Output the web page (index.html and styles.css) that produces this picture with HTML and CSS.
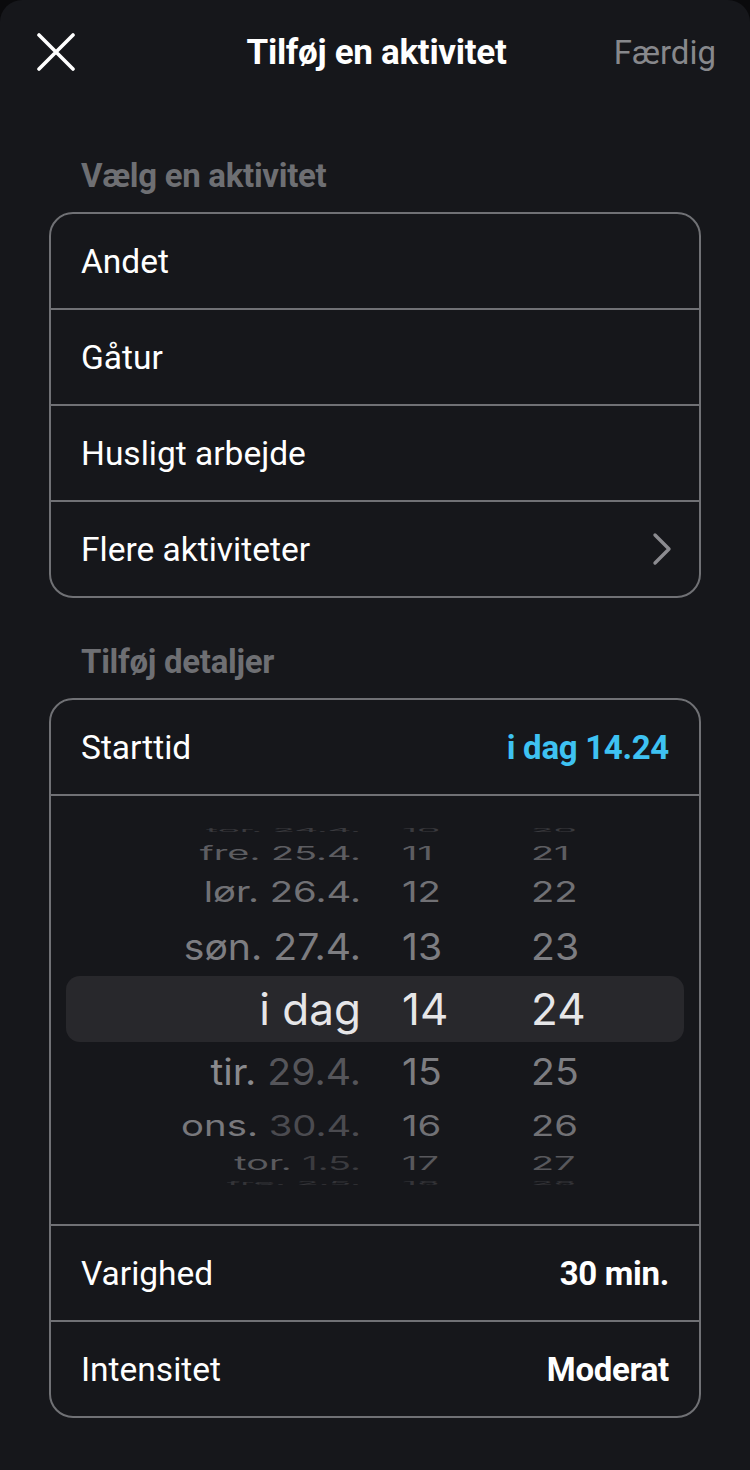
FILE: index.html
```html
<!DOCTYPE html>
<html lang="da">
<head>
<meta charset="utf-8">
<title>Tilføj en aktivitet</title>
<link rel="stylesheet" href="styles.css">
</head>
<body>
<div class="sheet">
  <header class="topbar">
    <button class="close" aria-label="Luk">
      <svg width="38" height="38" viewBox="0 0 38 38"><path d="M2 2 L36 36 M36 2 L2 36" stroke="#fff" stroke-width="3.6" stroke-linecap="round" fill="none"/></svg>
    </button>
    <h1 class="title">Tilføj en aktivitet</h1>
    <span class="done">Færdig</span>
  </header>

  <main class="content">
    <h2 class="section-label">Vælg en aktivitet</h2>
    <div class="card">
      <div class="row"><span class="label">Andet</span></div>
      <div class="row"><span class="label">Gåtur</span></div>
      <div class="row"><span class="label">Husligt arbejde</span></div>
      <div class="row"><span class="label">Flere aktiviteter</span>
        <svg class="chev" width="22" height="34" viewBox="0 0 22 34"><path d="M4 3 L18 17 L4 31" stroke="#8b8b90" stroke-width="3.4" stroke-linecap="round" stroke-linejoin="round" fill="none"/></svg>
      </div>
    </div>

    <h2 class="section-label second">Tilføj detaljer</h2>
    <div class="card">
      <div class="row"><span class="label">Starttid</span><span class="value blue">i dag 14.24</span></div>
      <div class="picker">
        <div class="prow p4"><span class="c-date"><span class="d">tor.</span> <span class="n">24.4.</span></span><span class="c-hour">10</span><span class="c-min">20</span></div>
        <div class="prow p3"><span class="c-date"><span class="d">fre.</span> <span class="n">25.4.</span></span><span class="c-hour">11</span><span class="c-min">21</span></div>
        <div class="prow p2"><span class="c-date"><span class="d">lør.</span> <span class="n">26.4.</span></span><span class="c-hour">12</span><span class="c-min">22</span></div>
        <div class="prow p1"><span class="c-date"><span class="d">søn.</span> <span class="n">27.4.</span></span><span class="c-hour">13</span><span class="c-min">23</span></div>
        <div class="prow p0"><span class="c-date">i dag</span><span class="c-hour">14</span><span class="c-min">24</span></div>
        <div class="prow n1"><span class="c-date"><span class="d">tir.</span> <span class="n">29.4.</span></span><span class="c-hour">15</span><span class="c-min">25</span></div>
        <div class="prow n2"><span class="c-date"><span class="d">ons.</span> <span class="n">30.4.</span></span><span class="c-hour">16</span><span class="c-min">26</span></div>
        <div class="prow n3"><span class="c-date"><span class="d">tor.</span> <span class="n">1.5.</span></span><span class="c-hour">17</span><span class="c-min">27</span></div>
        <div class="prow n4"><span class="c-date"><span class="d">fre.</span> <span class="n">2.5.</span></span><span class="c-hour">18</span><span class="c-min">28</span></div>
      </div>
      <div class="row"><span class="label">Varighed</span><span class="value">30 min.</span></div>
      <div class="row"><span class="label">Intensitet</span><span class="value">Moderat</span></div>
    </div>
  </main>
</div>
</body>
</html>
```

FILE: styles.css
```css
* { box-sizing: border-box; }
html, body { margin: 0; padding: 0; }
body {
  background: #0a0a0c;
  font-family: Roboto, "Noto Sans", "Liberation Sans", sans-serif;
  color: #fff;
}
.sheet {
  background: #16171b;
  min-height: 1470px;
  border-radius: 22px 22px 0 0;
}
.topbar {
  height: 104px;
  display: grid;
  grid-template-columns: 1fr auto 1fr;
  align-items: center;
  padding: 0 34px 0 37px;
}
.close {
  background: none;
  border: 0;
  padding: 0;
  width: 38px;
  height: 38px;
  display: flex;
  justify-self: start;
}
.title {
  margin: 0;
  font-size: 35px;
  font-weight: 700;
  letter-spacing: -0.3px;
  color: #fff;
}
.done {
  justify-self: end;
  font-size: 33px;
  color: #87888c;
}
.content {
  padding: 0 49px;
}
.section-label {
  margin: 52px 0 16px;
  padding-left: 32px;
  height: 40px;
  line-height: 40px;
  font-size: 33px;
  font-weight: 700;
  color: #6e6f73;
  letter-spacing: -0.3px;
}
.section-label.second { margin-top: 44px; }
.card {
  border: 2px solid #707175;
  border-radius: 24px;
  overflow: hidden;
}
.row {
  height: 94px;
  display: flex;
  align-items: center;
  justify-content: space-between;
  padding: 0 30px 0 30px;
}
.row + .row, .picker + .row {
  height: 96px;
  border-top: 2px solid #707175;
}
.row + .picker {
  border-top: 2px solid #707175;
}
.row .label {
  font-size: 33.5px;
  color: #fff;
}
.row .value {
  font-size: 33px;
  font-weight: 700;
  color: #fff;
  letter-spacing: -0.3px;
}
.row .value.blue { color: #3ec2f2; }
.chev { margin-right: -4px; }

/* wheel picker */
.picker {
  padding: 24px 15px 34px;
  font-family: Inter, "Liberation Sans", sans-serif;
  font-size: 44px;
}
.prow {
  display: flex;
  align-items: center;
  color: #7e7e82;
}
.prow > span { display: block; white-space: nowrap; line-height: 1; flex: none; }
.c-date { width: 295px; text-align: right; transform-origin: right center; }
.c-hour { width: 170px; padding-left: 41px; transform-origin: 41px center; }
.c-min { transform-origin: left center; }

.p4 { height: 20px; color: #3a3a3e; }
.p3 { height: 26px; color: #5d5d61; }
.p2 { height: 52px; color: #717175; }
.p1 { height: 58px; color: #7d7d81; }
.p0 { height: 66px; background: #28282c; border-radius: 14px; color: #e6e6e8; }
.n1 { height: 60px; color: #7d7d81; }
.n2 { height: 48px; color: #717175; }
.n3 { height: 26px; color: #58585c; }
.n4 { height: 14px; color: #343438; }

.p4 > span, .n4 > span { transform: scale(0.84, 0.12); }
.p3 > span, .n3 > span { transform: scale(0.86, 0.42); }
.p2 > span, .n2 > span { transform: scale(0.87, 0.65); }
.p1 > span, .n1 > span { transform: scale(0.89, 0.84); }
.p0 > span { transform: none; }

.n1 .d { color: #8a8a8e; }
.n1 .n { color: #55555a; }
.n2 .d { color: #78787c; }
.n2 .n { color: #4b4b50; }
.n3 .d { color: #5a5a5e; }
.n3 .n { color: #3b3b3f; }
```
